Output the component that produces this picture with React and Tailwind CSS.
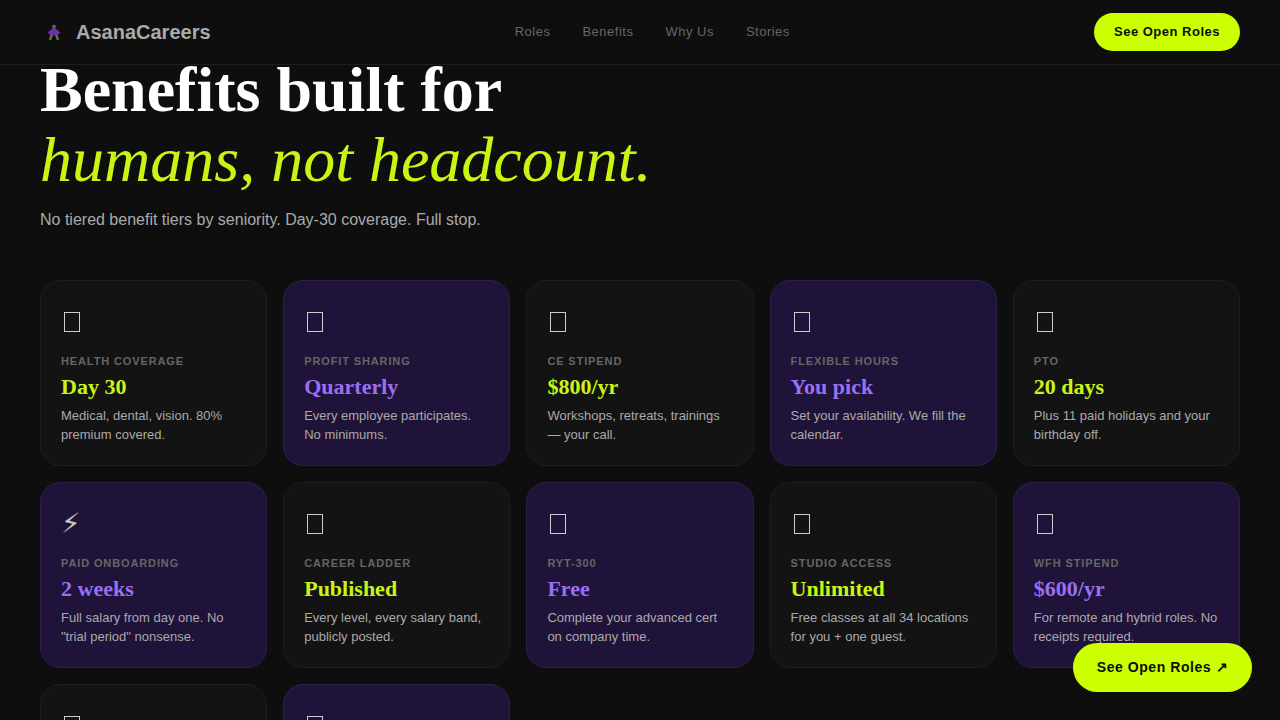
const serif = "font-['Liberation_Serif',serif]";

const cards = [
  { label: "HEALTH COVERAGE", value: "Day 30", desc: "Medical, dental, vision. 80% premium covered." },
  { label: "PROFIT SHARING", value: "Quarterly", desc: "Every employee participates. No minimums.", purple: true },
  { label: "CE STIPEND", value: "$800/yr", desc: "Workshops, retreats, trainings — your call." },
  { label: "FLEXIBLE HOURS", value: "You pick", desc: "Set your availability. We fill the calendar.", purple: true },
  { label: "PTO", value: "20 days", desc: "Plus 11 paid holidays and your birthday off." },
  { bolt: true, label: "PAID ONBOARDING", value: "2 weeks", desc: 'Full salary from day one. No "trial period" nonsense.', purple: true },
  { label: "CAREER LADDER", value: "Published", desc: "Every level, every salary band, publicly posted." },
  { label: "RYT-300", value: "Free", desc: "Complete your advanced cert on company time.", purple: true },
  { label: "STUDIO ACCESS", value: "Unlimited", desc: "Free classes at all 34 locations for you + one guest." },
  { label: "WFH STIPEND", value: "$600/yr", desc: "For remote and hybrid roles. No receipts required.", purple: true },
  {},
  { purple: true },
];

function Card({ bolt, label, value, desc, purple }) {
  return (
    <div className={`min-h-[186px] rounded-[20px] border px-[20px] pt-[20px] pb-[18px] ${purple ? "border-[#2d1f4d] bg-[#201339]" : "border-[#1e1e1e] bg-[#131313]"}`}>
      <div className="mb-[12px] flex h-[42px] items-start pt-[11px] pl-[3px]">
        {bolt ? (
          <span className="-mt-[11px] -ml-[3px] font-['DejaVu_Sans',sans-serif] text-[28px] leading-[42px] text-[#c4c4c4]">{"\u26A1\uFE0E"}</span>
        ) : (
          <svg width="16" height="20" viewBox="0 0 16 20" aria-hidden="true">
            <rect x="0.5" y="0.5" width="15" height="19" fill="none" stroke="#cccccc" strokeWidth="1" />
          </svg>
        )}
      </div>
      {label && <div className="mb-[6px] text-[11px] leading-[13px] font-semibold tracking-[0.88px] text-[#666666]">{label}</div>}
      {value && <div className={`${serif} mb-[6px] text-[22px] leading-[26px] font-bold ${purple ? "text-[#9a70f0]" : "text-[#c8f514]"}`}>{value}</div>}
      {desc && <p className="text-[13px] leading-[19.5px] text-[#aaaaaa]">{desc}</p>}
    </div>
  );
}

export default function App() {
  return (
    <div className="h-[720px] overflow-hidden bg-[#0e0e0e] font-['Liberation_Sans',sans-serif]">
      <nav className="fixed inset-x-0 top-0 z-10 flex h-[65px] items-center justify-between border-b border-[#1e1e1e] bg-[#0e0e0e] px-[40px]">
        <div className="flex items-center gap-[10px]">
          <svg width="26" height="26" viewBox="0 0 26 26" aria-hidden="true">
            <path d="M10 21l2-6h4l2 6" fill="none" stroke="#5f7a35" strokeWidth="2.4" />
            <path d="M14 7l2 3 4.5 3.5-3 2.5h-7l-3-2.5L12 10z" fill="#6b2fa8" />
            <circle cx="14" cy="7.5" r="1.8" fill="#6a6a58" />
          </svg>
          <span className="text-[20px] leading-[24px] font-bold text-[#aaaaaa]">AsanaCareers</span>
        </div>
        <div className="flex items-center gap-[32px] text-[13px] tracking-[0.5px] text-[#666666]">
          <span>Roles</span>
          <span>Benefits</span>
          <span>Why Us</span>
          <span>Stories</span>
        </div>
        <button className="h-[38px] w-[146px] rounded-full bg-[#ccff00] text-[13px] font-bold tracking-[0.5px] text-[#0d0d0d]">See Open Roles</button>
      </nav>

      <main className="px-[40px] pt-[55px]">
        <h1 className={`${serif} text-[64px] leading-[70.4px] font-bold text-white`}>
          Benefits built for
          <br />
          <span className="font-normal text-[#c8f514] italic">humans, not headcount.</span>
        </h1>
        <p className="mt-[12px] text-[16px] leading-[24px] text-[#aaaaaa]">No tiered benefit tiers by seniority. Day-30 coverage. Full stop.</p>
        <div className="mt-[48px] grid grid-cols-5 gap-[16px]">
          {cards.map((c, i) => (
            <Card key={i} {...c} />
          ))}
        </div>
      </main>

      <button className="fixed right-[28px] bottom-[28px] z-10 h-[49px] w-[179px] rounded-full bg-[#ccff00] text-[14px] font-bold tracking-[0.56px] text-[#0d0d0d]">See Open Roles ↗</button>
    </div>
  );
}
